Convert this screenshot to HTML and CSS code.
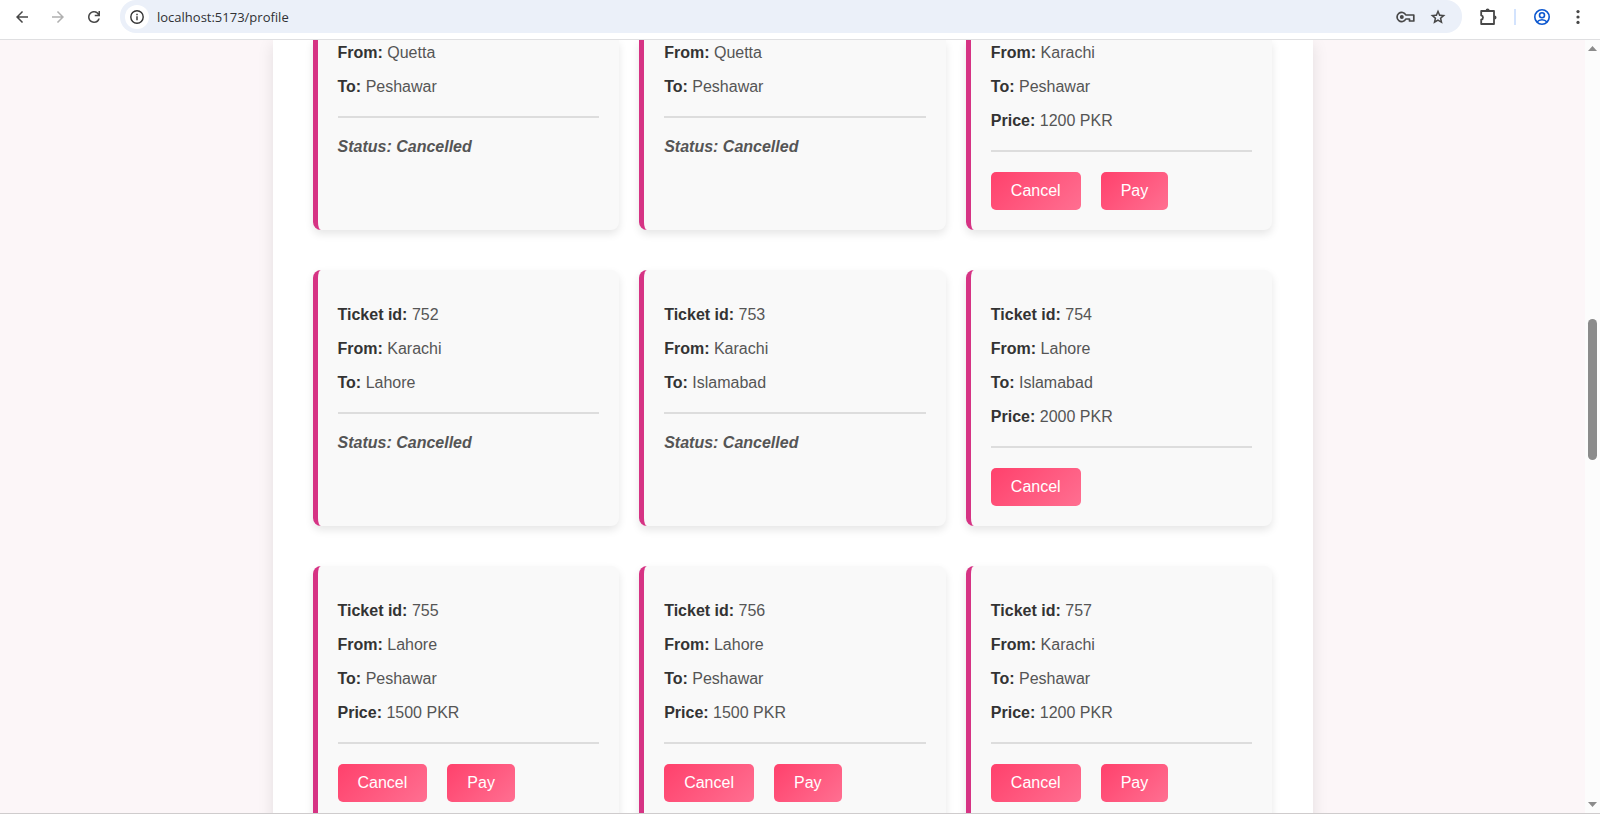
FILE: index.html
```
<!DOCTYPE html>
<html lang="en">
<head>
<meta charset="utf-8">
<title>Profile</title>
<link rel="stylesheet" href="styles.css">
</head>
<body>
<header class="toolbar">
  <nav class="nav">
    <button class="icon-btn" aria-label="Back"><svg viewBox="0 0 24 24"><path d="M20 11H7.8l5.6-5.6L12 4l-8 8 8 8 1.4-1.4L7.8 13H20z"/></svg></button>
    <button class="icon-btn faded" aria-label="Forward"><svg viewBox="0 0 24 24"><path d="M4 11h12.2l-5.6-5.6L12 4l8 8-8 8-1.4-1.4 5.6-5.6H4z"/></svg></button>
    <button class="icon-btn" aria-label="Reload"><svg viewBox="0 0 24 24"><path d="M12 20a8 8 0 1 1 6-13.3V4h2v7h-7V9h4.2A6 6 0 1 0 17.7 14h2.1A8 8 0 0 1 12 20z"/></svg></button>
  </nav>
  <div class="omnibox">
    <button class="site-info" aria-label="Site information"><svg viewBox="0 0 16 16"><circle cx="8" cy="8" r="6.2" fill="none" stroke="#333" stroke-width="1.4"/><path d="M7.3 7.2h1.4v4H7.3zM7.3 4.7h1.4v1.5H7.3z"/></svg></button>
    <input class="url" type="text" aria-label="Address" value="localhost:5173/profile">
    <div class="page-actions">
      <button class="icon-btn key" aria-label="Passwords"><svg viewBox="0 0 20 20"><path d="M9.800 8a4.600 4.600 0 1 0 0 4h3.700v2h4.300V8z" fill="none" stroke="currentColor" stroke-width="1.700" stroke-linejoin="round"/><circle cx="5.800" cy="10" r="2"/></svg></button>
      <button class="icon-btn" aria-label="Bookmark"><svg viewBox="0 0 24 24"><path d="m8.85 16.83 3.15-1.9 3.15 1.93-.83-3.6 2.78-2.4-3.65-.33L12 7.13l-1.45 3.38-3.65.32 2.78 2.43zM5.83 21l1.62-7.02L2 9.25l7.2-.63L12 2l2.8 6.62 7.2.63-5.45 4.73L18.17 21 12 17.27z"/></svg></button>
    </div>
  </div>
  <div class="actions">
    <button class="icon-btn puzzle" aria-label="Extensions"><svg viewBox="0 0 20 20"><path d="M3.200 4H16v13H3.200v-4.400c2.400-.4 2.400-3.800 0-4.200z" fill="none" stroke="currentColor" stroke-width="1.800" stroke-linejoin="round"/><path d="M7.600 3.500a2 2 0 0 1 4 0zM16.500 8.500a2 2 0 0 1 0 4z"/></svg></button>
    <span class="divider"></span>
    <button class="icon-btn profile" aria-label="Account"><svg viewBox="0 0 18 18"><g fill="none" stroke="currentColor" stroke-width="1.6"><circle cx="9" cy="9" r="7.200"/><circle cx="9" cy="7.200" r="2.500"/><path d="M4 14c2.500-3 7.500-3 10 0"/></g></svg></button>
    <button class="icon-btn" aria-label="Menu"><svg viewBox="0 0 20 20"><circle cx="10" cy="4" r="1.800"/><circle cx="10" cy="10" r="1.800"/><circle cx="10" cy="16" r="1.800"/></svg></button>
  </div>
</header>
<div class="viewport">
  <main class="page">
    <section class="panel">
      <div class="tickets">
        <article class="ticket clipped">
          <p><strong>From:</strong> Quetta</p><p><strong>To:</strong> Peshawar</p>
          <hr><p class="status">Status: Cancelled</p>
        </article>
        <article class="ticket clipped">
          <p><strong>From:</strong> Quetta</p><p><strong>To:</strong> Peshawar</p>
          <hr><p class="status">Status: Cancelled</p>
        </article>
        <article class="ticket clipped">
          <p><strong>From:</strong> Karachi</p><p><strong>To:</strong> Peshawar</p><p><strong>Price:</strong> 1200 PKR</p>
          <hr><div class="buttons"><button class="btn">Cancel</button><button class="btn">Pay</button></div>
        </article>
        <article class="ticket">
          <p><strong>Ticket id:</strong> 752</p><p><strong>From:</strong> Karachi</p><p><strong>To:</strong> Lahore</p>
          <hr><p class="status">Status: Cancelled</p>
        </article>
        <article class="ticket">
          <p><strong>Ticket id:</strong> 753</p><p><strong>From:</strong> Karachi</p><p><strong>To:</strong> Islamabad</p>
          <hr><p class="status">Status: Cancelled</p>
        </article>
        <article class="ticket">
          <p><strong>Ticket id:</strong> 754</p><p><strong>From:</strong> Lahore</p><p><strong>To:</strong> Islamabad</p><p><strong>Price:</strong> 2000 PKR</p>
          <hr><div class="buttons"><button class="btn">Cancel</button></div>
        </article>
        <article class="ticket">
          <p><strong>Ticket id:</strong> 755</p><p><strong>From:</strong> Lahore</p><p><strong>To:</strong> Peshawar</p><p><strong>Price:</strong> 1500 PKR</p>
          <hr><div class="buttons"><button class="btn">Cancel</button><button class="btn">Pay</button></div>
        </article>
        <article class="ticket">
          <p><strong>Ticket id:</strong> 756</p><p><strong>From:</strong> Lahore</p><p><strong>To:</strong> Peshawar</p><p><strong>Price:</strong> 1500 PKR</p>
          <hr><div class="buttons"><button class="btn">Cancel</button><button class="btn">Pay</button></div>
        </article>
        <article class="ticket">
          <p><strong>Ticket id:</strong> 757</p><p><strong>From:</strong> Karachi</p><p><strong>To:</strong> Peshawar</p><p><strong>Price:</strong> 1200 PKR</p>
          <hr><div class="buttons"><button class="btn">Cancel</button><button class="btn">Pay</button></div>
        </article>
      </div>
    </section>
  </main>
  <div class="scrollbar" aria-hidden="true">
    <svg class="arrow" viewBox="0 0 9 5"><path d="M4.500 0 9 5H0z"/></svg>
    <div class="track"><span class="thumb"></span></div>
    <svg class="arrow" viewBox="0 0 9 5"><path d="M0 0h9L4.500 5z"/></svg>
  </div>
</div>
</body>
</html>
```
FILE: styles.css
```
* { box-sizing: border-box; }

body {
  margin: 0;
  height: 100vh;
  display: flex;
  flex-direction: column;
  overflow: hidden;
  background: #fff;
  border-bottom: 1px solid #cfcccd;
  font-family: "Liberation Sans", Arial, sans-serif;
  font-size: 16px;
  color: #555;
}

button { font: inherit; border: 0; padding: 0; cursor: pointer; }

/* Browser toolbar */
.toolbar {
  flex: none;
  height: 40px;
  padding: 0 12px;
  display: flex;
  align-items: flex-start;
  gap: 16px;
  border-bottom: 1px solid #dfdfe1;
}
.nav, .actions { display: flex; align-items: center; gap: 16px; height: 33px; }
.icon-btn {
  width: 20px;
  height: 20px;
  display: grid;
  place-items: center;
  background: none;
  color: #474747;
}
.icon-btn svg { width: 18px; height: 18px; fill: currentColor; }
.faded { color: #b0b0b0; }
.key svg, .puzzle svg { width: 20px; height: 20px; }
.omnibox {
  flex: 1;
  height: 33px;
  padding: 0 14px 0 5px;
  display: flex;
  align-items: center;
  gap: 8px;
  background: #ebf0f9;
  border-radius: 16px;
}
.page-actions { display: flex; gap: 12px; }
.site-info {
  width: 24px;
  height: 24px;
  display: grid;
  place-items: center;
  border-radius: 50%;
  background: #fff;
}
.site-info svg { width: 16px; height: 16px; fill: #333; }
.url {
  flex: 1;
  border: 0;
  padding: 0;
  background: none;
  outline: 0;
  font: 13px "Open Sans", sans-serif;
  color: #303134;
}
.divider { width: 2px; height: 16px; background: #d3e3fd; }
.profile { color: #0b57d0; }

/* Scrolled page */
.viewport { flex: 1; min-height: 0; display: flex; }
.page { flex: 1; overflow: hidden; background: #fcf6f8; }
.panel {
  max-width: 1040px;
  margin: 0 auto;
  padding: 0 40px 40px;
  background: #fff;
  box-shadow: 0 4px 15px rgba(0, 0, 0, 0.1);
}
.tickets {
  display: grid;
  grid-template-columns: repeat(3, 1fr);
  gap: 40px 20px;
}
.ticket {
  padding: 20px;
  background: #f9f9f9;
  border-left: 5px solid #d63384;
  border-radius: 8px;
  box-shadow: 0 4px 8px rgba(0, 0, 0, 0.1);
}
.ticket p { margin: 16px 0; line-height: 18px; }
.ticket strong { color: #333; }
.ticket hr { margin: 20px 0; border: 0; border-top: 2px solid #ddd; }
.ticket .status { margin: 0; font-weight: bold; font-style: italic; }
.clipped { padding-top: 4px; border-top-left-radius: 0; border-top-right-radius: 0; }
.clipped p:first-child { margin-top: 0; }
.buttons { display: flex; gap: 20px; }
.btn {
  padding: 10px 20px;
  line-height: 18px;
  border-radius: 5px;
  color: #fff;
  background: linear-gradient(135deg, #ff416c, #ff6f91);
}

.scrollbar {
  flex: none;
  width: 15px;
  padding: 6px 0;
  display: flex;
  flex-direction: column;
  align-items: center;
  background: #fcfcfc;
}
.arrow { width: 9px; height: 5px; fill: #8b8b8b; }
.track { flex: 1; width: 9px; padding: 3px 0; display: flex; flex-direction: column; }
.track::before { content: ""; flex: 265; }
.track::after { content: ""; flex: 339; }
.thumb { flex: 141; border-radius: 5px; background: #8b8b8b; }
```
